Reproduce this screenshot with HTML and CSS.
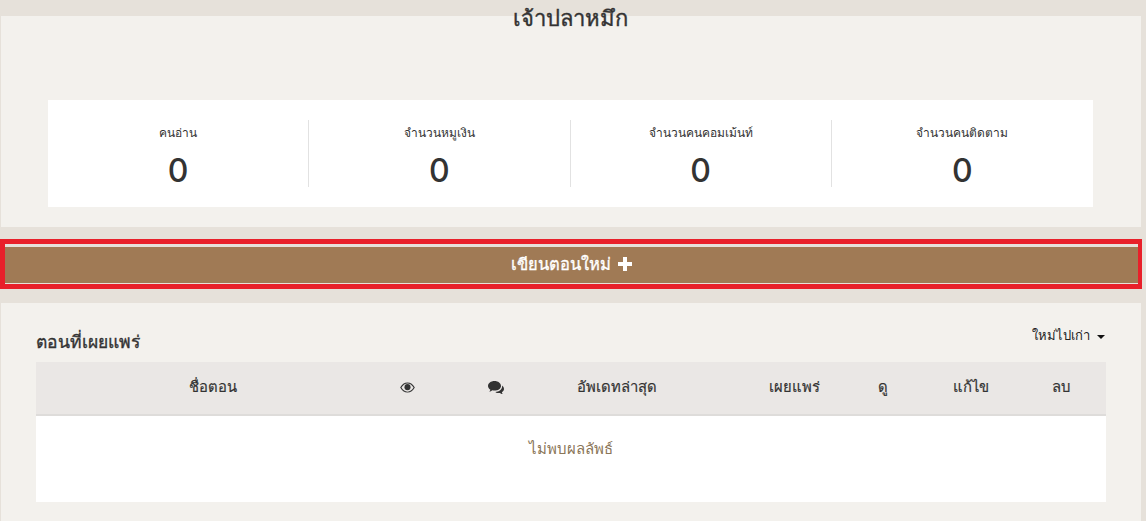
FILE: index.html
```html
<!DOCTYPE html>
<html lang="th">
<head>
<meta charset="utf-8">
<title>เจ้าปลาหมึก</title>
<link rel="stylesheet" href="styles.css">
</head>
<body>
<main class="page">
  <section class="panel panel-top">
    <h1 class="title">เจ้าปลาหมึก</h1>
    <div class="stats">
      <div class="stat"><div class="stat-label">คนอ่าน</div><div class="stat-value">0</div></div>
      <div class="stat"><div class="stat-label">จำนวนหมูเงิน</div><div class="stat-value">0</div></div>
      <div class="stat"><div class="stat-label">จำนวนคนคอมเม้นท์</div><div class="stat-value">0</div></div>
      <div class="stat"><div class="stat-label">จำนวนคนติดตาม</div><div class="stat-value">0</div></div>
    </div>
  </section>
  <div class="highlight">
    <a class="write-btn" href="#">เขียนตอนใหม่
      <svg class="plus" viewBox="0 0 14 14" width="14" height="14"><path d="M5 0h4v5h5v4H9v5H5V9H0V5h5z" fill="#fff"/></svg>
    </a>
  </div>
  <section class="panel panel-list">
    <div class="list-head">
      <h2 class="list-title">ตอนที่เผยแพร่</h2>
      <div class="sort">ใหม่ไปเก่า <span class="caret"></span></div>
    </div>
    <table class="episodes">
      <colgroup>
        <col class="c-name"><col class="c-eye"><col class="c-chat"><col class="c-upd"><col class="c-pub"><col class="c-view"><col class="c-edit"><col class="c-del">
      </colgroup>
      <thead>
        <tr>
          <th>ชื่อตอน</th>
          <th><svg class="ico" viewBox="0 0 16 12" width="15" height="11"><path fill="#333" fill-rule="evenodd" d="M8 .5C4.600.5 1.700 2.600 0 6c1.700 3.400 4.600 5.500 8 5.500s6.300-2.100 8-5.500C14.300 2.600 11.400.5 8 .5zM8 1.500c2.600 0 5 1.700 6.600 4.500-1.600 2.800-4 4.500-6.600 4.500S3 8.800 1.400 6C3 3.200 5.400 1.500 8 1.500z"/><circle cx="8" cy="5.600" r="3.300" fill="#333"/></svg></th>
          <th><svg class="ico" viewBox="0 0 16 14" width="16" height="14"><path fill="#333" d="M6.500 0C2.900 0 0 2.200 0 4.900c0 1.500.9 2.900 2.400 3.800-.2.800-.6 1.400-1.100 2 1.100 0 2.200-.6 3-1.400.7.200 1.400.3 2.200.3 3.600 0 6.500-2.100 6.500-4.700S10.100 0 6.500 0z"/><path fill="#333" d="M14 4.600c.100.300.100.500.100.800 0 3-3 5.300-6.800 5.500.9.800 2.100 1.200 3.300 1.200.5 0 1-.1 1.500-.2.500.6 1.400 1.100 2.600 1.200-.4-.5-.7-1.100-.8-1.800 1.300-.8 2.100-1.900 2.100-3.200 0-1.300-.8-2.600-2-3.500z"/></svg></th>
          <th>อัพเดทล่าสุด</th>
          <th class="th-pub">เผยแพร่</th>
          <th>ดู</th>
          <th>แก้ไข</th>
          <th>ลบ</th>
        </tr>
      </thead>
      <tbody>
        <tr><td class="empty" colspan="8">ไม่พบผลลัพธ์</td></tr>
      </tbody>
    </table>
  </section>
</main>
</body>
</html>
```
FILE: styles.css
```css
* { box-sizing: border-box; }
html, body { margin: 0; height: 100%; }
body {
  background: #e6e1da;
  color: #333;
  font-family: "Noto Sans", "Open Sans", "Liberation Sans", sans-serif;
  overflow: hidden;
}
.page { width: 1142px; padding-top: 16px; }
.panel { background: #f3f1ed; margin-left: 1px; margin-right: 1px; display: flow-root; }
.panel-top { height: 211px; padding: 0 48px 0 47px; }
.title {
  margin: -15px 0 0;
  height: 99px;
  font-size: 22px;
  line-height: 32px;
  font-weight: 400;
  -webkit-text-stroke: 0.4px #333;
  text-align: center;
  color: #333;
}
.stats {
  display: grid;
  grid-template-columns: repeat(4, 1fr);
  background: #fff;
  padding: 20px 0;
  height: 107px;
}
.stat { text-align: center; border-right: 1px solid #e2e2e2; }
.stat:last-child { border-right: 0; }
.stat-label { font-size: 12px; line-height: 25px; color: #333; }
.stat-value { font-size: 32px; line-height: 32px; margin-top: 10px; font-weight: 500; color: #333; font-family: "Inter", sans-serif; }
.highlight {
  margin-top: 12px;
  height: 50px;
  border: 5px solid #e8202a;
  border-right-width: 4px;
  background: #e6e1da;
  padding: 3px 0 1px;
}
.write-btn {
  display: flex;
  align-items: center;
  justify-content: center;
  gap: 7px;
  height: 36px;
  padding-bottom: 2px;
  background: #a07a55;
  color: #fff;
  font-size: 16.5px;
  font-weight: 400;
  -webkit-text-stroke: 0.35px #fff;
  text-decoration: none;
}
.panel-list { margin-top: 14px; padding: 0 35px 30px; height: 240px; }
.list-head { display: flex; justify-content: space-between; height: 59px; }
.list-title { margin: 24px 0 0 0; font-size: 17.5px; line-height: 28px; font-weight: 400; -webkit-text-stroke: 0.35px #333; color: #333; }
.sort { margin-top: 20px; padding-right: 1px; font-size: 13px; line-height: 24px; color: #222; }
.caret {
  display: inline-block;
  width: 0; height: 0;
  margin-left: 4px;
  vertical-align: middle;
  border-top: 4px solid #111;
  border-left: 4px solid transparent;
  border-right: 4px solid transparent;
}
.episodes { width: 1070px; table-layout: fixed; border-collapse: collapse; }
.c-name { width: 354px; } .c-eye { width: 34px; } .c-chat { width: 144px; } .c-upd { width: 98px; }
.c-pub { width: 174px; } .c-view { width: 86px; } .c-edit { width: 90px; } .c-del { width: 90px; }
.episodes th {
  height: 53px;
  background: #eae7e5;
  border-bottom: 2px solid #dedcda;
  font-size: 14.8px;
  font-weight: 400;
  -webkit-text-stroke: 0.2px #333;
  color: #333;
  text-align: center;
  padding: 0 0 3px;
  white-space: nowrap;
}
.episodes .th-pub { padding-left: 82px; }
.ico { display: inline-block; vertical-align: middle; margin-bottom: 2px; }
.empty {
  height: 87px;
  background: #fff;
  text-align: center;
  vertical-align: top;
  padding-top: 21px;
  font-size: 15px;
  line-height: 22px;
  color: #8a7558;
}
```
